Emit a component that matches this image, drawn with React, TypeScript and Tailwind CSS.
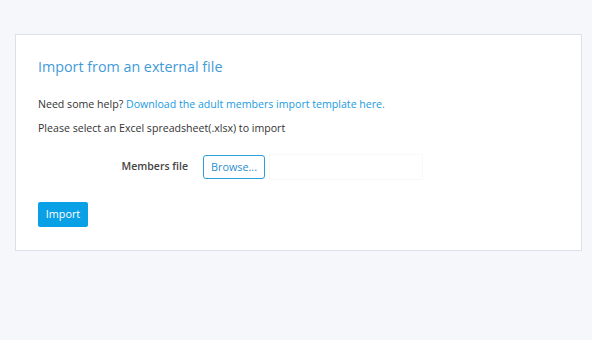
export default function App() {
    return (
        <div className="min-h-[340px] w-[592px] bg-[#f6f7fb] pt-[34px] pl-[15px]" style={{ fontFamily: '"Open Sans", sans-serif' }}>
            <div className="w-[567px] h-[217px] bg-white border border-[#d9e1ea] px-[22px] pt-[22px]">
                {/* Title */}
                <h2 className="text-[14.3px] leading-[20px] text-[#3f9bd8] font-normal">Import from an external file</h2>

                <p className="mt-[19px] text-[10.6px] leading-[16px] text-[#333]">
                    Need some help?{" "}
                    <a href="#" className="text-[#1a9be0]">Download the adult members import template here.</a>
                </p>
                <p className="mt-[8px] text-[10.6px] leading-[16px] text-[#333]">
                    Please select an Excel spreadsheet(.xlsx) to import
                </p>

                {/* File row */}
                <div className="mt-[18px] flex items-center">
                    <label className="w-[150px] mr-[15px] text-right text-[10.5px] font-semibold text-[#444]">Members file</label>
                    <button className="h-[24px] w-[62px] rounded-[3px] border border-[#2a9fd8] text-[10.8px] text-[#2a8fcf] bg-white">
                        Browse...
                    </button>
                    <div className="ml-[4px] h-[26px] w-[154px] border border-[#f8f9fa]"></div>
                </div>

                <button className="mt-[22px] h-[25px] w-[50px] rounded-[2px] bg-[#0aa0e6] text-[10.8px] text-white">
                    Import
                </button>
            </div>
        </div>
    );
}
